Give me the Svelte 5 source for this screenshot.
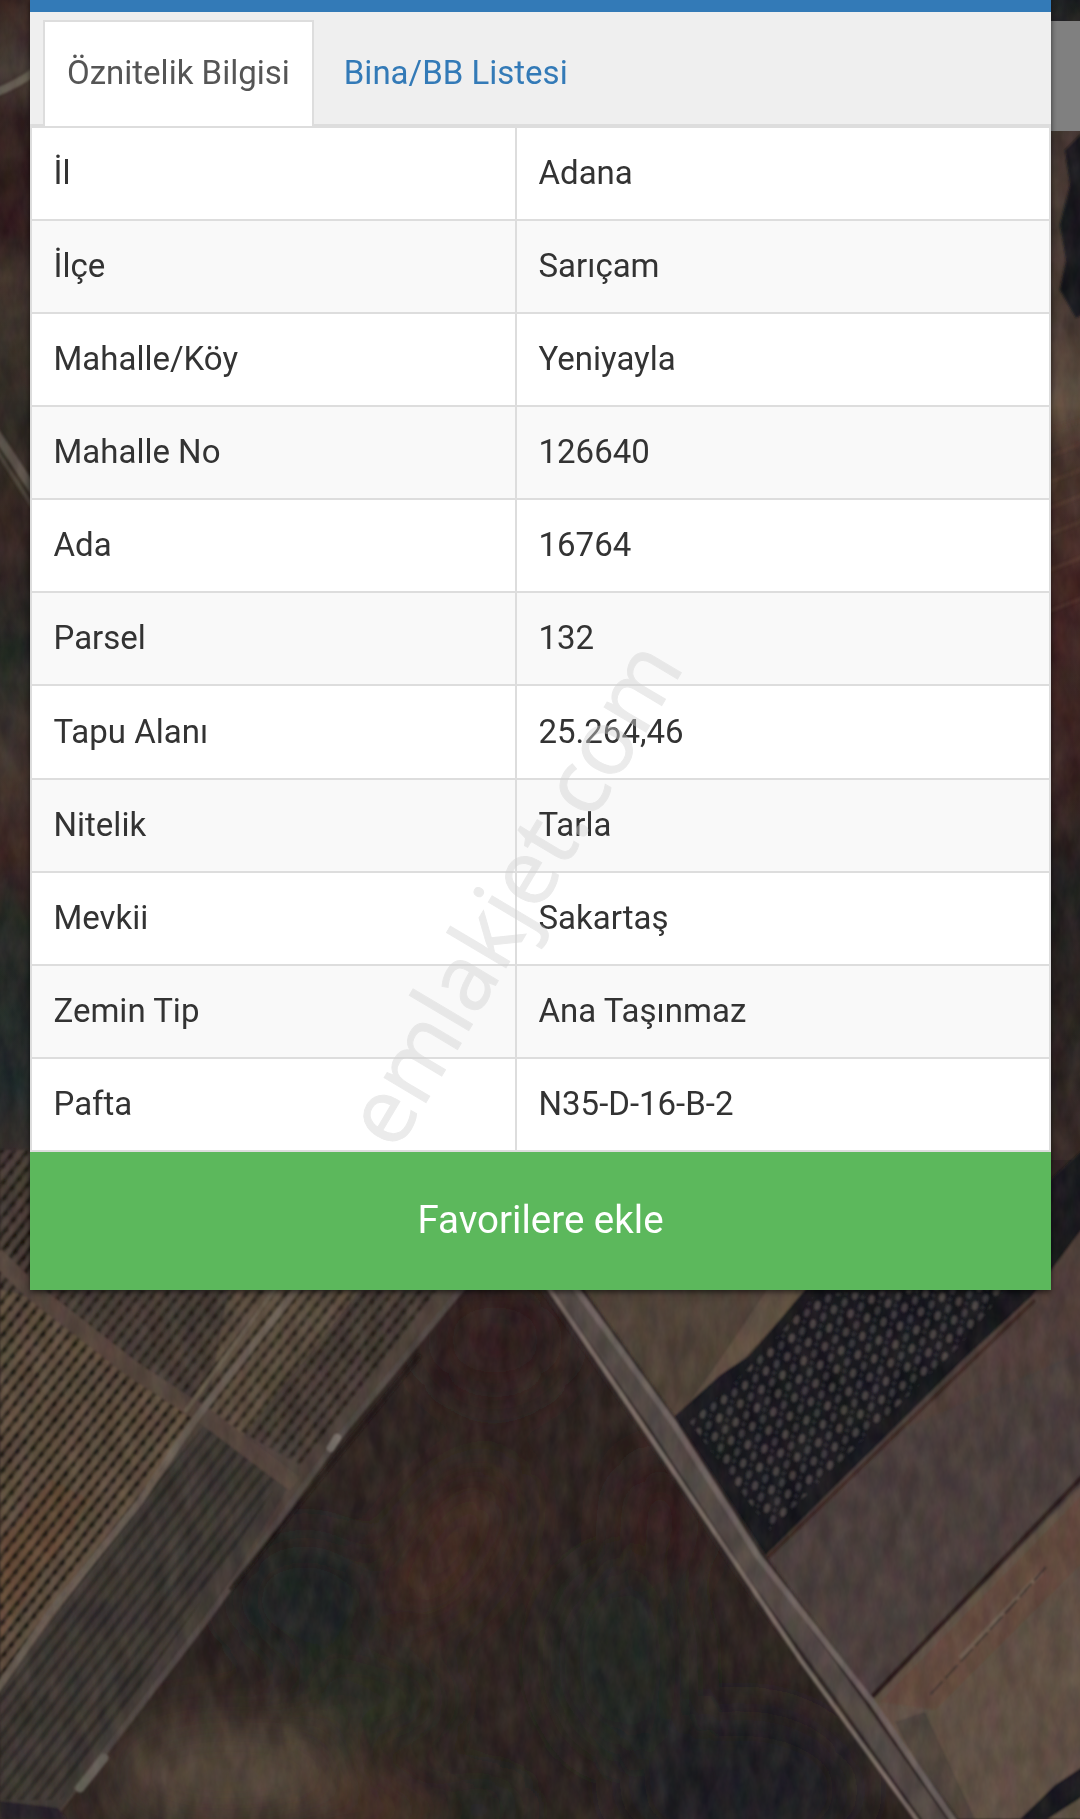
<script>
	const tabs = ['Öznitelik Bilgisi', 'Bina/BB Listesi'];
	let activeTab = 0;

	const rows = [
		['İl', 'Adana'],
		['İlçe', 'Sarıçam'],
		['Mahalle/Köy', 'Yeniyayla'],
		['Mahalle No', '126640'],
		['Ada', '16764'],
		['Parsel', '132'],
		['Tapu Alanı', '25.264,46'],
		['Nitelik', 'Tarla'],
		['Mevkii', 'Sakartaş'],
		['Zemin Tip', 'Ana Taşınmaz'],
		['Pafta', 'N35-D-16-B-2']
	];
</script>

<main class="page">
	<!-- satellite map -->
	<svg class="map" viewBox="0 0 1080 1819" aria-hidden="true">
		<defs>
			<filter id="soft" x="-50%" y="-50%" width="200%" height="200%"><feGaussianBlur stdDeviation="26" /></filter>
			<filter id="edge"><feGaussianBlur stdDeviation="1.3" /></filter>
			<filter id="grain" x="0" y="0" width="100%" height="100%" color-interpolation-filters="sRGB">
				<feTurbulence type="fractalNoise" baseFrequency="0.06 0.03" numOctaves="4" seed="8" />
				<feColorMatrix
					values="0.7 0.2 0 0 -0.24  0.4 0.5 0 0 -0.26  0.4 0.2 0.3 0 -0.27  0 0 0 0 0.16"
				/>
			</filter>
			<pattern id="rows" width="10.4" height="12" patternUnits="userSpaceOnUse" patternTransform="rotate(38)">
				<rect x="0" width="4.4" height="12" fill="#1f1a14" opacity="0.6" />
				<circle cx="2.2" cy="5" r="3" fill="#15120d" opacity="0.65" />
			</pattern>
			<pattern id="faintRows" width="11" height="14" patternUnits="userSpaceOnUse" patternTransform="rotate(38)">
				<rect x="0" width="5" height="14" fill="#25221d" opacity="0.55" />
			</pattern>
			<pattern id="trees" width="17" height="19" patternUnits="userSpaceOnUse" patternTransform="rotate(14)">
				<ellipse cx="4" cy="5" rx="2.8" ry="4.4" fill="#4f4848" />
				<ellipse cx="12.5" cy="14.5" rx="2.6" ry="4.2" fill="#413e42" />
				<circle cx="12" cy="5" r="1.6" fill="#34343a" />
			</pattern>
			<linearGradient id="leftStrip" x2="0" y2="1">
				<stop offset="0" stop-color="#35211f" />
				<stop offset="0.06" stop-color="#4a3f39" />
				<stop offset="0.1" stop-color="#35211f" />
				<stop offset="0.2" stop-color="#2f191b" />
				<stop offset="0.24" stop-color="#44362e" />
				<stop offset="0.36" stop-color="#302b23" />
				<stop offset="0.46" stop-color="#372522" />
				<stop offset="0.56" stop-color="#242824" />
				<stop offset="0.66" stop-color="#453730" />
				<stop offset="0.74" stop-color="#3d2622" />
				<stop offset="0.8" stop-color="#252a25" />
				<stop offset="0.94" stop-color="#20292a" />
				<stop offset="1" stop-color="#3b332d" />
			</linearGradient>
			<linearGradient id="rightStrip" x2="0" y2="1">
				<stop offset="0" stop-color="#171a1f" />
				<stop offset="0.1" stop-color="#493a35" />
				<stop offset="0.28" stop-color="#4c3c34" />
				<stop offset="0.35" stop-color="#6d5848" />
				<stop offset="0.39" stop-color="#4c382f" />
				<stop offset="0.5" stop-color="#452522" />
				<stop offset="0.68" stop-color="#3a2221" />
				<stop offset="0.76" stop-color="#211f1e" />
				<stop offset="0.92" stop-color="#2b2321" />
				<stop offset="1" stop-color="#3a2c28" />
			</linearGradient>
		</defs>

		<rect width="1080" height="1819" fill="#2f2421" />
		<rect width="40" height="1160" fill="url(#leftStrip)" />
		<rect x="1040" width="40" height="1160" fill="url(#rightStrip)" />

		<g filter="url(#edge)">
			<path d="M-5 93 Q18 84 40 68" stroke="#70675c" stroke-width="8" fill="none" />
			<path d="M-5 432 L40 500" stroke="#62564f" stroke-width="9" />
			<path d="M-5 448 L40 518" stroke="#51473f" stroke-width="4" />
			<path d="M1080 135 L1065 150 L1070 185 L1060 225 L1066 260 L1060 290 L1076 318 L1090 310 V135Z" fill="#14171c" />
			<path d="M1050 430l35-12m-35 38l35-14m-35 40l35-14m-35 40l35-14m-35 40l35-14m-35 50l35-14m-35 55l35-14" stroke="#65463a" stroke-width="4" opacity="0.4" />
		</g>

		<!-- bare soil in the middle -->
		<g filter="url(#soft)">
			<ellipse cx="305" cy="1600" rx="75" ry="65" fill="#1b2421" />
			<ellipse cx="370" cy="1700" rx="80" ry="40" fill="#2b2e21" />
			<ellipse cx="450" cy="1550" rx="45" ry="90" fill="#442c21" transform="rotate(35 450 1550)" />
			<ellipse cx="495" cy="1340" rx="70" ry="60" fill="#321e1f" />
			<ellipse cx="620" cy="1660" rx="70" ry="100" fill="#212623" />
			<ellipse cx="740" cy="1790" rx="120" ry="80" fill="#1f1b20" />
			<ellipse cx="660" cy="1520" rx="40" ry="60" fill="#351e1d" />
			<ellipse cx="230" cy="1775" rx="120" ry="52" fill="#5a4c3d" />
			<ellipse cx="370" cy="1810" rx="60" ry="28" fill="#513627" />
			<ellipse cx="480" cy="1810" rx="45" ry="28" fill="#1e2823" />
		</g>

		<!-- planted rows on the left -->
		<g filter="url(#edge)">
			<path d="M0 1150 H560 L461 1292 L344 1431 L207 1619 L70 1800 L55 1819 H0Z" fill="#51443e" />
			<path d="M0 1290 L31 1297 L196 1418 L138 1504 L0 1686Z" fill="#6a5846" />
			<path d="M0 1540 L52 1480 L90 1500 L0 1640Z" fill="#745139" opacity="0.7" />
			<path d="M230 1280 L296 1290 H360 L240 1440 L207 1410Z" fill="#665746" />
			<path d="M0 1230 H40 V1295 L196 1418 L138 1504 L0 1686Z" fill="url(#rows)" />
			<path d="M35 1290 H440 L300 1465 L207 1412 L60 1310Z" fill="url(#rows)" opacity="0.8" />
			<path d="M0 1150 H40 V1290 H0Z" fill="url(#rows)" />
			<path d="M0 1690 L138 1504 L205 1425 L293 1480 L207 1619 L60 1810 H0Z" fill="#453d38" />
			<path d="M0 1690 L138 1504 L205 1425 L280 1480 L195 1610 L60 1800 H0Z" fill="url(#faintRows)" />
			<path d="M-5 1255 L31 1290 L131 1368 L207 1418 L295 1484" stroke="#5a4840" stroke-width="17" fill="none" />
			<path d="M300 1285 L196 1418 L138 1504 L52 1610 L-5 1692" stroke="#74685d" stroke-width="7" fill="none" opacity="0.9" />
			<path d="M278 1285 L185 1412" stroke="#6f6353" stroke-width="4" />
			<path d="M464 1286 L344 1431 L207 1619 L76 1790" stroke="#574d48" stroke-width="6" fill="none" />
			<path d="M420 1355 L302 1500 L230 1590" stroke="#1c1614" stroke-width="5" fill="none" opacity="0.7" />
			<path d="M337 1438 L331 1448" stroke="#857b74" stroke-width="8" stroke-linecap="round" />
			<path d="M104 1758 L80 1788" stroke="#6d6761" stroke-width="9" stroke-linecap="round" />
			<path d="M0 1801 L58 1808 L66 1819 H0Z" fill="#29212a" />
		</g>

		<!-- parcels east of the road -->
		<g filter="url(#edge)">
			<path d="M560 1270 H860 L780 1320 L735 1370 L668 1424Z" fill="#54463b" />
			<path d="M815 1285 L780 1320 L735 1368 L690 1402 L730 1345 L770 1285Z" fill="#675447" />
			<path d="M1085 1222 L965 1352 L760 1560 L868 1705 L1085 1485Z" fill="#4f433f" />
			<path d="M1085 1222 L1035 1290 L900 1430 L1085 1350Z" fill="#55423d" />
			<path d="M870 1700 L1085 1482 V1819 H945Z" fill="#685748" />
			<path d="M880 1702 L1085 1492 V1560 L935 1710Z" fill="#6a5043" />
			<path d="M895 1722 L925 1712 L975 1819 H945Z" fill="#483e3a" opacity="0.6" />
			<path d="M668 1422 L720 1375 L750 1355 L808 1286 L1050 1180 L1085 1148 V1225 L1032 1296 L965 1358 L765 1556 L748 1546 L680 1435Z" fill="#16181f" />
			<path d="M690 1422 L745 1372 L815 1295 L1010 1284 L960 1345 L770 1530Z" fill="url(#trees)" />
			<path d="M1085 1474 L872 1697" stroke="#2f1e1d" stroke-width="5" />
			<path d="M1035 1300 L765 1560" stroke="#412a26" stroke-width="4" />
			<path d="M1042 1572 L960 1658" stroke="#827464" stroke-width="4" opacity="0.6" />
			<path d="M1046 1567 L1010 1608 L930 1695" stroke="#40352f" stroke-width="2" stroke-dasharray="18 4" fill="none" />
			<path d="M1020 1819 L1055 1785 L1085 1765 V1795 L1048 1819Z" fill="#14171a" />
		</g>

		<!-- road -->
		<g filter="url(#edge)" fill="none">
			<path d="M552 1275 L660 1427 L754 1570 L838 1683 L944 1830" stroke="#332826" stroke-width="36" />
			<path d="M554 1275 L662 1427 L755 1570 L838 1683 L942 1830" stroke="#5a4f4c" stroke-width="20" />
			<path d="M566 1275 L672 1421 L758 1556 L873 1703 L960 1830" stroke="#776b67" stroke-width="6" />
			<path d="M540 1275 L651 1438 L751 1586 L802 1662 L924 1830" stroke="#85776f" stroke-width="4" />
		</g>

		<rect width="1080" height="1819" filter="url(#grain)" />
		<rect x="1040" y="21" width="40" height="110" fill="#808080" />
	</svg>

	<section class="panel">
		<div class="title-bar"></div>
		<nav class="tabs">
			{#each tabs as tab, i}
				<button class="tab" class:active={activeTab === i} on:click={() => (activeTab = i)}>{tab}</button>
			{/each}
		</nav>

		<table>
			<tbody>
				{#each rows as [name, value]}
					<tr>
						<td class="name">{name}</td>
						<td>{value}</td>
					</tr>
				{/each}
			</tbody>
		</table>

		<button class="favorite">Favorilere ekle</button>
	</section>

	<svg class="watermark" viewBox="0 0 1080 1819">
		<text transform="translate(396 1153) rotate(-59.3)" textLength="566">emlakjet.com</text>
	</svg>
</main>

<style>
	:global(body) {
		margin: 0;
		overflow: hidden;
	}

	.page {
		position: relative;
		width: 1080px;
		height: 1819px;
		overflow: hidden;
		font-family: Roboto, sans-serif;
		font-size: 33px;
		color: #333;
	}

	.map,
	.watermark {
		position: absolute;
		inset: 0;
		width: 1080px;
		height: 1819px;
	}

	.watermark {
		pointer-events: none;
		font-family: 'Open Sans', sans-serif;
		font-size: 91px;
		fill: #d2d2d2;
		stroke: #d2d2d2;
		stroke-width: 1px;
		opacity: 0.44;
	}

	.panel {
		position: relative;
		width: 1021px;
		margin-left: 30px;
		background: #fff;
		box-shadow: 0 2px 6px rgba(0, 0, 0, 0.6);
	}

	.title-bar {
		height: 12px;
		background: #337ab7;
	}

	.tabs {
		display: flex;
		box-sizing: border-box;
		height: 114px;
		padding: 8px 0 0 13px;
		background: #efefef;
		border-bottom: 2px solid #ddd;
	}

	button {
		font: inherit;
		cursor: pointer;
	}

	.tab {
		box-sizing: border-box;
		height: 106px;
		margin-right: 6px;
		padding: 0 22px 4px;
		background: transparent;
		border: 2px solid transparent;
		border-bottom: 0;
		color: #337ab7;
	}

	.tab.active {
		background: #fff;
		border-color: #ddd;
		color: #555;
	}

	table {
		width: 100%;
		height: 1026px;
		table-layout: fixed;
		border-collapse: collapse;
	}

	td {
		padding: 0 22px 2px 21.5px;
		border: 2px solid #ddd;
	}

	td.name {
		width: 439.5px;
	}

	tr:nth-child(even) {
		background: #f9f9f9;
	}

	.favorite {
		display: block;
		width: 100%;
		height: 138px;
		padding: 0 0 4px;
		border: 0;
		background: #5cb85c;
		color: #fff;
		font-size: 38.5px;
	}
</style>
